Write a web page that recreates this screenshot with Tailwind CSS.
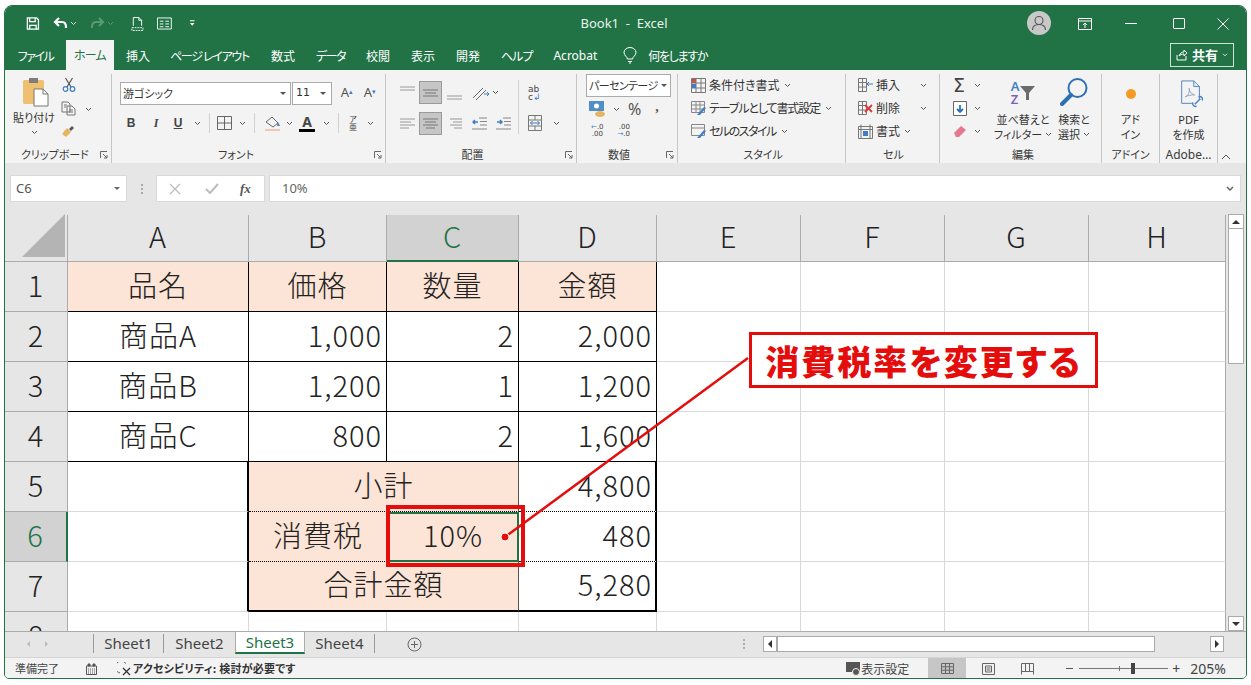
<!DOCTYPE html>
<html lang="ja">
  <head>
    <meta charset="UTF-8" />
    <title>Book1 - Excel</title>
    <script src="https://cdn.jsdelivr.net/npm/@tailwindcss/browser@4"></script>
  </head>
  <body class="bg-white w-[1251px] h-[685px] overflow-hidden font-['Noto_Sans_CJK_JP','Noto_Sans',sans-serif] [font-feature-settings:'palt'] text-[#3a3a3a]">
    <div class="relative mt-[5px] ml-[4px] w-[1243px] h-[674px] rounded-t-[8px] rounded-b-[5px] border border-[#217346] overflow-hidden flex flex-col bg-[#e6e6e6]">
      <!-- Title bar -->
      <div class="h-[35px] bg-[#217346] flex items-center text-white shrink-0">
        <div class="w-[190px] pl-[21px] flex items-center gap-[13px]">
          <svg class="w-[15px] h-[15px]" viewBox="0 0 15 15" fill="none" stroke="#fff" stroke-width="1.4"><path d="M1.5 1.5h10l2 2v10h-12z"/><path d="M4 1.5v4h6v-4M4 13.5v-4h7v4"/></svg>
          <div class="flex items-center gap-[2px]">
            <svg class="w-[15px] h-[13px]" viewBox="0 0 15 13" fill="none" stroke="#fff" stroke-width="2.2"><path d="M6 1L2 5l4 4"/><path d="M2 5h7c3 0 4 2 4 5v1"/></svg>
            <svg class="w-[7px] h-[5px]" viewBox="0 0 7 5" fill="none" stroke="#cfe3d8"><path d="M1 1l2.5 2.5L6 1"/></svg>
          </div>
          <div class="flex items-center gap-[2px]">
            <svg class="w-[15px] h-[13px]" viewBox="0 0 15 13" fill="none" stroke="#5a9a78" stroke-width="2"><path d="M9 1l4 4-4 4"/><path d="M13 5H6c-3 0-4 2-4 5v1"/></svg>
            <svg class="w-[7px] h-[5px]" viewBox="0 0 7 5" fill="none" stroke="#5a9a78"><path d="M1 1l2.5 2.5L6 1"/></svg>
          </div>
          <svg class="w-[14px] h-[16px] ml-[4px]" viewBox="0 0 14 16" fill="none" stroke="#fff"><path d="M2.5 10V1h6l3 3v6M8.5 1v3h3"/><path d="M1 12h12v3H1z" stroke-dasharray="2 1"/></svg>
          <svg class="w-[16px] h-[13px]" viewBox="0 0 16 13" fill="none" stroke="#fff"><path d="M.5.5h15v12H.5zM3 4h4M9 4h4M3 7h4M9 7h4M3 10h4M9 10h4"/></svg>
          <svg class="w-[7px] h-[7px] ml-[4px]" viewBox="0 0 7 7" fill="#fff"><path d="M1 0h5v1H1zM1 3h5L3.5 6z"/></svg>
        </div>
        <div class="flex-1 text-center text-[13px] text-[#e9f2ed] font-['Noto_Sans',sans-serif] pl-[26px]">Book1&nbsp; -&nbsp; Excel</div>
        <div class="flex items-center">
          <div class="w-[24px] h-[24px] -mt-[2px] rounded-full bg-[#c8c8c8] flex items-center justify-center">
            <svg class="w-[16px] h-[16px]" viewBox="0 0 16 16" fill="none" stroke="#555" stroke-width="1.1"><circle cx="8" cy="5.5" r="4"/><path d="M1.5 15c0-4 3-5.5 6.5-5.5s6.5 1.5 6.5 5.5"/></svg>
          </div>
          <svg class="w-[14px] h-[12px] ml-[27px]" viewBox="0 0 14 12" fill="none" stroke="#fff"><path d="M.5.5h13v11H.5zM.5 3h13M7 10V5M5 7l2-2 2 2"/></svg>
          <div class="w-[12px] h-[1px] bg-white ml-[33px]"></div>
          <div class="w-[12px] h-[11px] border border-white ml-[36px] rounded-[1px]"></div>
          <svg class="w-[12px] h-[12px] ml-[32px] mr-[17px]" viewBox="0 0 12 12" stroke="#fff" stroke-width="1"><path d="M.5.5l11 11M11.5.5l-11 11"/></svg>
        </div>
      </div>
      <!-- Tabs -->
      <div class="h-[29px] bg-[#217346] flex items-end text-white text-[12px] shrink-0 relative">
        <div class="flex items-center h-[29px]">
          <span class="w-[61px] text-center tracking-[-1.5px]">ファイル</span>
          <span class="w-[48px] h-[30px] -mt-[1px] bg-[#f3f3f3] text-[#217346] flex items-center justify-center tracking-[-.8px]">ホーム</span>
          <span class="ml-[12px]">挿入</span>
          <span class="ml-[20px] tracking-[-1.3px]">ページ レイアウト</span>
          <span class="ml-[22px]">数式</span>
          <span class="ml-[21px] tracking-[-1.5px]">データ</span>
          <span class="ml-[21px]">校閲</span>
          <span class="ml-[21px]">表示</span>
          <span class="ml-[21px]">開発</span>
          <span class="ml-[21px] tracking-[-1px]">ヘルプ</span>
          <span class="ml-[21px] font-['Noto_Sans',sans-serif]">Acrobat</span>
          <svg class="w-[14px] h-[17px] ml-[26px]" viewBox="0 0 14 17" fill="none" stroke="#fff"><path d="M4.5 12c0-2-3.500-3.500-3.500-6.500a6 5 0 0 1 12 0c0 3-3.500 4.500-3.500 6.500zM5 14.500h4M6 16h2"/></svg>
          <span class="ml-[11px] tracking-[-1.3px]">何をしますか</span>
        </div>
        <div class="absolute right-[12px] top-[2px] w-[64px] h-[24px] border border-[#cfe3d8] flex items-center justify-center gap-[4px] text-[13px] font-bold">
          <svg class="w-[12px] h-[12px]" viewBox="0 0 12 12" fill="none" stroke="#fff"><path d="M1 6v5h9V7M3 7c1-3 3-4 5-4V1l3 3-3 3V5C6 5 4 6 3 7z"/></svg>
          <span>共有</span>
          <svg class="w-[6px] h-[4px]" viewBox="0 0 7 5" fill="none" stroke="#fff"><path d="M1 1l2.5 2.5L6 1"/></svg>
        </div>
      </div>
      <!-- Ribbon -->
      <div class="h-[93px] bg-[#f3f3f3] flex text-[12px] shrink-0 pt-[4px] relative">
        <!-- Clipboard -->
        <div class="w-[107px] h-[89px] border-r border-[#c6c6c6] flex flex-col shrink-0">
          <div class="h-[72px] flex pl-[10px]">
            <div class="w-[38px] flex flex-col items-center">
              <svg class="w-[27px] h-[30px] ml-[3px] mt-[3px]" viewBox="0 0 27 30"><rect x="1" y="3" width="21" height="24" rx="1.5" fill="#eec06f"/><rect x="7" y="1" width="9" height="5" fill="#7d7d7d"/><path d="M12 12h9l5 5v12H12z" fill="#fff" stroke="#777"/><path d="M21 12v5h5" fill="none" stroke="#777"/></svg>
              <span class="text-[11px] text-[#333] mt-[3px] leading-[14px] whitespace-nowrap">貼り付け</span>
              <svg class="w-[7px] h-[5px] mt-[6px]" viewBox="0 0 7 5" fill="none" stroke="#555"><path d="M1 1l2.5 2.5L6 1"/></svg>
            </div>
            <div class="w-[21px] flex flex-col items-center gap-[9px] ml-[5px] pt-[3px]">
              <svg class="w-[14px] h-[15px]" viewBox="0 0 14 15" fill="none" stroke="#555" stroke-width="1.2"><path d="M3.5 1l5.5 9M10.5 1L5 10"/><circle cx="3.5" cy="12" r="2.3" stroke="#3e7fc4"/><circle cx="10.5" cy="12" r="2.3" stroke="#3e7fc4"/></svg>
              <svg class="w-[15px] h-[15px]" viewBox="0 0 15 15" fill="none" stroke="#777"><path d="M1 1h6l2 2v8H1zM6 5h5l3 3v6H6z" fill="#f3f3f3"/><path d="M3 4h3M3 6h2M8 9h4M8 11h4"/></svg>
              <svg class="w-[15px] h-[13px]" viewBox="0 0 15 13"><path d="M1 9l5-6 4 4-5 5z" fill="#e6b45e"/><path d="M8 4l3-3 2 2-3 3z" fill="#555"/></svg>
            </div>
            <svg class="w-[7px] h-[5px] mt-[33px] ml-[6px]" viewBox="0 0 7 5" fill="none" stroke="#555"><path d="M1 1l2.5 2.5L6 1"/></svg>
          </div>
          <div class="h-[17px] flex items-center justify-between text-[11px] pl-[16px] pr-[3px] leading-none"><span>クリップボード</span><svg class="w-[8px] h-[8px]" viewBox="0 0 8 8" fill="none" stroke="#666"><path d="M.5 7V.5H7M3 3l4 4M7 4v3H4"/></svg></div>
        </div>
        <!-- Font -->
        <div class="w-[274px] h-[89px] border-r border-[#c6c6c6] flex flex-col shrink-0 pl-[8px]">
          <div class="h-[72px] flex flex-col">
            <div class="flex items-center h-[24px] mt-[7px] gap-[1px]">
              <div class="w-[171px] h-[23px] bg-white border border-[#ababab] flex items-center justify-between px-[2px] text-[11px] text-[#333]"><span>游ゴシック</span><span class="border-x-[3px] border-t-[3px] border-x-transparent border-t-[#555] mr-[2px]"></span></div>
              <div class="w-[40px] h-[23px] bg-white border border-[#ababab] flex items-center justify-between px-[3px] text-[11px] text-[#333] font-['DejaVu_Sans',sans-serif]"><span>11</span><span class="border-x-[3px] border-t-[3px] border-x-transparent border-t-[#555] mr-[2px]"></span></div>
              <span class="ml-[7px] w-[14px] text-[13px] font-['Noto_Sans',sans-serif] text-[#555] text-center">A<sup class="text-[7px] text-[#3e7fc4]">▴</sup></span>
              <span class="ml-[8px] w-[14px] text-[13px] font-['Noto_Sans',sans-serif] text-[#555] text-center">A<sup class="text-[7px] text-[#3e7fc4]">▾</sup></span>
            </div>
            <div class="flex items-center h-[24px] mt-[6px] text-[#444]">
              <b class="w-[20px] ml-[1px] text-center font-['Liberation_Sans',sans-serif] text-[12px]">B</b>
              <i class="w-[20px] ml-[5px] text-center font-['Liberation_Serif',serif] font-bold text-[12px]">I</i>
              <u class="w-[16px] ml-[4px] text-center font-['Liberation_Sans',sans-serif] font-bold text-[12px]">U</u>
              <svg class="w-[7px] h-[5px] ml-[8px]" viewBox="0 0 7 5" fill="none" stroke="#555"><path d="M1 1l2.5 2.5L6 1"/></svg>
              <div class="w-px h-[20px] bg-[#d0d0d0] ml-[8px]"></div>
              <svg class="w-[15px] h-[14px] ml-[7px]" viewBox="0 0 15 14" fill="none" stroke="#666"><path d="M.5.5h14v13H.5zM7.5.5v13M.5 7h14"/></svg>
              <svg class="w-[7px] h-[5px] ml-[7px]" viewBox="0 0 7 5" fill="none" stroke="#555"><path d="M1 1l2.5 2.5L6 1"/></svg>
              <div class="w-px h-[20px] bg-[#d0d0d0] ml-[8px]"></div>
              <svg class="w-[17px] h-[16px] ml-[9px]" viewBox="0 0 17 16"><path d="M2 7l6-5 6 6-5 4z" fill="none" stroke="#666"/><path d="M14 7l2 4h-3z" fill="#3e7fc4"/><rect x="1" y="14" width="15" height="2" fill="#f2c6b0"/></svg>
              <svg class="w-[7px] h-[5px] ml-[5px]" viewBox="0 0 7 5" fill="none" stroke="#555"><path d="M1 1l2.5 2.5L6 1"/></svg>
              <div class="w-[16px] ml-[6px] flex flex-col items-center leading-none"><span class="text-[14px] font-['Noto_Sans',sans-serif] font-bold h-[13px] leading-[13px]">A</span><span class="w-[16px] h-[3px] bg-black mt-[1px]"></span></div>
              <svg class="w-[7px] h-[5px] ml-[8px]" viewBox="0 0 7 5" fill="none" stroke="#555"><path d="M1 1l2.5 2.5L6 1"/></svg>
              <div class="w-px h-[20px] bg-[#d0d0d0] ml-[8px]"></div>
              <span class="w-[12px] ml-[8px] text-[8px] leading-[8px] text-center">ア<br />亜</span>
              <svg class="w-[7px] h-[5px] ml-[8px]" viewBox="0 0 7 5" fill="none" stroke="#555"><path d="M1 1l2.5 2.5L6 1"/></svg>
            </div>
          </div>
          <div class="h-[17px] flex items-center justify-between text-[11px] pr-[3px] leading-none"><span class="flex-1 text-center pr-[22px]">フォント</span><svg class="w-[8px] h-[8px]" viewBox="0 0 8 8" fill="none" stroke="#666"><path d="M.5 7V.5H7M3 3l4 4M7 4v3H4"/></svg></div>
        </div>
        <!-- Alignment -->
        <div class="w-[191px] h-[89px] border-r border-[#c6c6c6] flex flex-col shrink-0 pl-[14px]">
          <div class="h-[72px] flex">
            <div class="w-[118px] flex flex-col pt-[7px]">
              <div class="flex items-center h-[23px]">
                <svg class="w-[15px] h-[8px] -mt-[6px]" viewBox="0 0 15 8" stroke="#999"><path d="M0 1h15M0 4h15"/></svg>
                <div class="w-[23px] h-[23px] ml-[4px] bg-[#c6c6c6] border border-[#9a9a9a] flex items-center justify-center"><svg class="w-[15px] h-[8px]" viewBox="0 0 15 8" stroke="#777"><path d="M0 1h15M2 4h11M0 7h15"/></svg></div>
                <svg class="w-[15px] h-[8px] ml-[5px] mt-[6px]" viewBox="0 0 15 8" stroke="#999"><path d="M0 4h15M0 7h15"/></svg>
                <svg class="w-[18px] h-[16px] ml-[10px]" viewBox="0 0 18 16" fill="none" stroke="#666"><path d="M1 13L11 3M4 15L14 5"/><path d="M12 9h5M15 7l2 2-2 2" stroke="#3e7fc4"/></svg>
                <svg class="w-[7px] h-[5px] ml-[2px]" viewBox="0 0 7 5" fill="none" stroke="#555"><path d="M1 1l2.5 2.5L6 1"/></svg>
              </div>
              <div class="flex items-center h-[23px] mt-[8px]">
                <svg class="w-[15px] h-[11px]" viewBox="0 0 15 11" stroke="#999"><path d="M0 1h15M0 4h11M0 7h15M0 10h9"/></svg>
                <div class="w-[23px] h-[23px] ml-[4px] bg-[#c6c6c6] border border-[#9a9a9a] flex items-center justify-center"><svg class="w-[15px] h-[11px]" viewBox="0 0 15 11" stroke="#777"><path d="M0 1h15M2 4h11M0 7h15M3 10h9"/></svg></div>
                <svg class="w-[12px] h-[11px] ml-[8px]" viewBox="0 0 12 11" stroke="#999"><path d="M0 1h12M3 4h9M0 7h12M4 10h8"/></svg>
                <svg class="w-[15px] h-[13px] ml-[10px]" viewBox="0 0 15 13" fill="none" stroke="#888"><path d="M7 1h8M8 4.5h7M8 8h7M0 12h15"/><path d="M6 5H1M3 3L1 5l2 2" stroke="#3e7fc4" stroke-width="1.5"/></svg>
                <svg class="w-[15px] h-[13px] ml-[9px]" viewBox="0 0 15 13" fill="none" stroke="#888"><path d="M7 1h8M8 4.5h7M8 8h7M0 12h15"/><path d="M1 5h5M4 3l2 2-2 2" stroke="#3e7fc4" stroke-width="1.5"/></svg>
              </div>
            </div>
            <div class="w-px h-[54px] bg-[#d0d0d0] mt-[6px]"></div>
            <div class="flex flex-col pl-[9px] pt-[11px]">
              <span class="text-[9px] leading-[8px] font-['DejaVu_Sans',sans-serif] text-[#444] whitespace-nowrap">ab<br />c<span class="text-[#3e7fc4]">↲</span></span>
              <div class="flex items-center mt-[14px]">
                <svg class="w-[14px] h-[16px]" viewBox="0 0 14 16" fill="none" stroke="#777"><path d="M.5.5h13v15H.5zM.5 5h13M.5 11h13M7 .5V5M7 11v4"/><path d="M2.5 8h9M4.5 6l-2 2 2 2M9.5 6l2 2-2 2" stroke="#3e7fc4"/></svg>
                <svg class="w-[7px] h-[5px] ml-[11px]" viewBox="0 0 7 5" fill="none" stroke="#555"><path d="M1 1l2.5 2.5L6 1"/></svg>
              </div>
            </div>
          </div>
          <div class="h-[17px] flex items-center justify-between text-[11px] pr-[3px] leading-none"><span class="flex-1 text-center pr-[20px]">配置</span><svg class="w-[8px] h-[8px]" viewBox="0 0 8 8" fill="none" stroke="#666"><path d="M.5 7V.5H7M3 3l4 4M7 4v3H4"/></svg></div>
        </div>
        <!-- Number -->
        <div class="w-[101px] h-[89px] border-r border-[#c6c6c6] flex flex-col shrink-0 pl-[9px]">
          <div class="h-[72px] flex flex-col">
            <div class="w-[85px] h-[23px] bg-white border border-[#ababab] flex items-center justify-between px-[2px] text-[11px] text-[#333]"><span class="whitespace-nowrap tracking-[-.6px]">パーセンテージ</span><span class="border-x-[3px] border-t-[3px] border-x-transparent border-t-[#555] mr-[1px]"></span></div>
            <div class="flex items-center h-[18px] mt-[3px] ml-[3px]">
              <svg class="w-[17px] h-[16px]" viewBox="0 0 17 16"><rect y="0" width="15" height="10" fill="#4f8fc4"/><circle cx="7.5" cy="5" r="2.5" fill="#fff"/><ellipse cx="11" cy="13" rx="5" ry="3" fill="#e6b45e"/></svg>
              <svg class="w-[7px] h-[5px] ml-[7px]" viewBox="0 0 7 5" fill="none" stroke="#555"><path d="M1 1l2.5 2.5L6 1"/></svg>
              <span class="ml-[8px] text-[16px] font-['Noto_Sans',sans-serif] leading-none text-[#555]">%</span>
              <span class="ml-[14px] text-[14px] font-['Liberation_Serif',serif] font-bold leading-none text-[#555] -mt-[4px]">,</span>
            </div>
            <div class="flex mt-[6px] ml-[5px] text-[7px] leading-[7px] font-['DejaVu_Sans',sans-serif] text-[#444]">
              <span class="text-right w-[12px]"><span class="text-[#3e7fc4]">←</span>.0<br />.00</span>
              <span class="text-right w-[13px] ml-[14px]">.00<br /><span class="text-[#3e7fc4]">→</span>.0</span>
            </div>
          </div>
          <div class="h-[17px] flex items-center justify-between text-[11px] pr-[3px] leading-none"><span class="flex-1 text-center pr-[14px]">数値</span><svg class="w-[8px] h-[8px]" viewBox="0 0 8 8" fill="none" stroke="#666"><path d="M.5 7V.5H7M3 3l4 4M7 4v3H4"/></svg></div>
        </div>
        <!-- Styles -->
        <div class="w-[168px] h-[89px] border-r border-[#c6c6c6] flex flex-col shrink-0 pl-[13px]">
          <div class="h-[72px] flex flex-col gap-[1px] text-[#333]">
            <div class="flex items-center h-[22px]"><svg class="w-[15px] h-[15px] mr-[3px]" viewBox="0 0 15 15" fill="none" stroke="#777"><path d="M.5.5h14v14H.5zM.5 5h14M.5 10h14M5 .5v14M10 .5v14"/><rect x="1" y="1" width="4" height="4" fill="#c9514a" stroke="none"/><rect x="1" y="6" width="4" height="4" fill="#3e7fc4" stroke="none"/></svg>条件付き書式<svg class="w-[7px] h-[5px] ml-[4px]" viewBox="0 0 7 5" fill="none" stroke="#555"><path d="M1 1l2.5 2.5L6 1"/></svg></div>
            <div class="flex items-center h-[22px] whitespace-nowrap"><svg class="w-[16px] h-[15px] mr-[2px]" viewBox="0 0 16 15" fill="none" stroke="#888"><path d="M.5.5h13v11H.5zM.5 4h13M.5 8h13M5 .5v11M9 .5v11"/><path d="M6 14l7-8 2 1-6 7z" fill="#3e7fc4" stroke="none"/></svg><span class="tracking-[-1.1px]">テーブルとして書式設定</span><svg class="w-[7px] h-[5px] ml-[5px]" viewBox="0 0 7 5" fill="none" stroke="#555"><path d="M1 1l2.5 2.5L6 1"/></svg></div>
            <div class="flex items-center h-[22px]"><svg class="w-[16px] h-[15px] mr-[2px]" viewBox="0 0 16 15" fill="none" stroke="#888"><path d="M.5.5h13v11H.5zM.5 4h13"/><path d="M6 14l7-8 2 1-6 7z" fill="#3e7fc4" stroke="none"/></svg><span class="tracking-[-1.5px]">セルのスタイル</span><svg class="w-[7px] h-[5px] ml-[5px]" viewBox="0 0 7 5" fill="none" stroke="#555"><path d="M1 1l2.5 2.5L6 1"/></svg></div>
          </div>
          <div class="h-[17px] flex items-center justify-center text-[11px] leading-none pr-[10px]">スタイル</div>
        </div>
        <!-- Cells -->
        <div class="w-[94px] h-[89px] border-r border-[#c6c6c6] flex flex-col shrink-0 pl-[12px]">
          <div class="h-[72px] flex flex-col gap-[1px] text-[#333]">
            <div class="flex items-center h-[22px]"><svg class="w-[15px] h-[14px] mr-[3px]" viewBox="0 0 15 14" fill="none" stroke="#777"><path d="M.5.5h8v13h-8zM.5 4.5h8M.5 9h8M4.5.5v13"/><path d="M15 6H9M11 4L9 6l2 2" stroke="#3e7fc4"/></svg>挿入<svg class="w-[7px] h-[5px] ml-[20px]" viewBox="0 0 7 5" fill="none" stroke="#555"><path d="M1 1l2.5 2.5L6 1"/></svg></div>
            <div class="flex items-center h-[22px]"><svg class="w-[15px] h-[14px] mr-[3px]" viewBox="0 0 15 14" fill="none" stroke="#777"><path d="M.5.5h8v13h-8zM.5 4.5h8M.5 9h8M4.5.5v13"/><path d="M7 4l7 7M14 4l-7 7" stroke="#d83b3b" stroke-width="1.8"/></svg>削除<svg class="w-[7px] h-[5px] ml-[20px]" viewBox="0 0 7 5" fill="none" stroke="#555"><path d="M1 1l2.5 2.5L6 1"/></svg></div>
            <div class="flex items-center h-[22px]"><svg class="w-[15px] h-[15px] mr-[3px]" viewBox="0 0 15 15" fill="none" stroke="#777"><path d="M.5 2.5h14v12H.5zM.5 5.5h14M3 .5v14M12 .5v14"/><rect x="5" y="7" width="5" height="5" fill="#3e7fc4" stroke="none"/></svg>書式<svg class="w-[7px] h-[5px] ml-[4px]" viewBox="0 0 7 5" fill="none" stroke="#555"><path d="M1 1l2.5 2.5L6 1"/></svg></div>
          </div>
          <div class="h-[17px] flex items-center justify-center text-[11px] leading-none pr-[10px]">セル</div>
        </div>
        <!-- Editing -->
        <div class="w-[162px] h-[89px] border-r border-[#c6c6c6] flex flex-col shrink-0 pl-[13px]">
          <div class="h-[72px] flex">
            <div class="w-[36px] flex flex-col gap-[1px]">
              <div class="flex items-center h-[22px]"><span class="text-[19px] leading-none font-['DejaVu_Sans',sans-serif] text-[#444]">Σ</span><svg class="w-[7px] h-[5px] ml-[9px]" viewBox="0 0 7 5" fill="none" stroke="#555"><path d="M1 1l2.5 2.5L6 1"/></svg></div>
              <div class="flex items-center h-[22px]"><svg class="w-[14px] h-[15px]" viewBox="0 0 14 15" fill="#fff" stroke="#666"><path d="M.5.5h13v14H.5z"/><path d="M7 4v7M4 8l3 3 3-3" fill="none" stroke="#2e6fb4" stroke-width="1.8"/></svg><svg class="w-[7px] h-[5px] ml-[7px]" viewBox="0 0 7 5" fill="none" stroke="#555"><path d="M1 1l2.5 2.5L6 1"/></svg></div>
              <div class="flex items-center h-[22px]"><svg class="w-[14px] h-[13px]" viewBox="0 0 14 13"><path d="M1 8l7-7 5 4-7 7H3z" fill="#e5788f"/></svg><svg class="w-[7px] h-[5px] ml-[7px]" viewBox="0 0 7 5" fill="none" stroke="#555"><path d="M1 1l2.5 2.5L6 1"/></svg></div>
            </div>
            <div class="w-[62px] flex flex-col items-center ml-[3px] text-[11px] leading-[15px] text-[#333]">
              <div class="h-[36px] flex items-center gap-[1px] mt-[1px]">
                <span class="text-[13px] leading-[13px] font-['Noto_Sans',sans-serif] font-semibold"><span class="text-[#3e7fc4]">A</span><br /><span class="text-[#7a5fb8]">Z</span></span>
                <svg class="w-[15px] h-[14px]" viewBox="0 0 15 14" fill="#6b6b6b"><path d="M0 0h15L9 7v7H6V7z"/></svg>
              </div>
              <span class="mt-[1px] whitespace-nowrap">並べ替えと</span>
              <span class="whitespace-nowrap flex items-center">フィルター<svg class="w-[7px] h-[5px] ml-[3px]" viewBox="0 0 7 5" fill="none" stroke="#555"><path d="M1 1l2.5 2.5L6 1"/></svg></span>
            </div>
            <div class="w-[38px] flex flex-col items-center ml-[1px] text-[11px] leading-[15px] text-[#333]">
              <svg class="w-[28px] h-[30px] mt-[3px] mb-[4px]" viewBox="0 0 28 30" fill="none"><circle cx="17.5" cy="11" r="9" stroke="#2e6fb4" stroke-width="2"/><path d="M11 18L2 27" stroke="#2e6fb4" stroke-width="4" stroke-linecap="round"/></svg>
              <span class="mt-[1px] whitespace-nowrap">検索と</span>
              <span class="whitespace-nowrap flex items-center">選択<svg class="w-[7px] h-[5px] ml-[3px]" viewBox="0 0 7 5" fill="none" stroke="#555"><path d="M1 1l2.5 2.5L6 1"/></svg></span>
            </div>
          </div>
          <div class="h-[17px] flex items-center justify-center text-[11px] leading-none pr-[8px]">編集</div>
        </div>
        <!-- Add-in -->
        <div class="w-[58px] h-[89px] border-r border-[#c6c6c6] flex flex-col items-center shrink-0">
          <div class="h-[72px] flex flex-col items-center text-[11px] leading-[15px] text-[#333]">
            <div class="w-[10px] h-[10px] rounded-full bg-[#f59a23] mt-[15px] mb-[13px]"></div>
            <span>アド</span><span>イン</span>
          </div>
          <div class="h-[17px] flex items-center justify-center text-[11px] leading-none">アドイン</div>
        </div>
        <!-- Adobe -->
        <div class="w-[58px] h-[89px] border-r border-[#c6c6c6] flex flex-col items-center shrink-0">
          <div class="h-[72px] flex flex-col items-center text-[11px] leading-[15px] text-[#333]">
            <svg class="w-[26px] h-[28px] mt-[6px] mb-[4px] ml-[4px]" viewBox="0 0 26 30" fill="none" stroke="#4a7fc0"><path d="M3 1h13l6 6v14M3 1v24h11M16 1v6h6"/><path d="M7 18c3-1 5-6 4-9 0 4 3 6 6 7-3 0-7 0-10 2z" stroke="#7a8fb0" stroke-width=".8"/><path d="M17 26l6-6M15 24a3 3 0 0 0 4 4M21 18a3 3 0 0 1 4 4" stroke-width="1.5"/></svg>
            <span class="font-['Noto_Sans',sans-serif]">PDF</span><span>を作成</span>
          </div>
          <div class="h-[17px] flex items-center justify-center text-[12px] leading-none whitespace-nowrap font-['Noto_Sans',sans-serif]">Adobe…</div>
        </div>
        <svg class="absolute right-[15px] bottom-[3px] w-[10px] h-[6px]" viewBox="0 0 10 6" fill="none" stroke="#555"><path d="M1 5l4-4 4 4"/></svg>
      </div>
      <!-- Formula bar -->
      <div class="h-[40px] bg-[#e6e6e6] flex items-end pb-[1px] gap-[2px] pl-[5px] shrink-0">
        <div class="w-[117px] h-[27px] bg-white border border-[#d9d9d9] flex items-center justify-between pl-[5px] pr-[6px] text-[13px] font-['Noto_Sans',sans-serif] text-[#555]"><span>C6</span><span class="border-x-[3px] border-t-[3px] border-x-transparent border-t-[#666]"></span></div>
        <div class="w-[25px] h-[27px] flex flex-col items-center justify-center gap-[2px]"><span class="w-[2px] h-[2px] bg-[#aaa]"></span><span class="w-[2px] h-[2px] bg-[#aaa]"></span><span class="w-[2px] h-[2px] bg-[#aaa]"></span></div>
        <div class="w-[109px] h-[27px] bg-white border border-[#d9d9d9] flex items-center">
          <svg class="w-[12px] h-[12px] ml-[12px]" viewBox="0 0 12 12" stroke="#bcbcbc" stroke-width="1.3"><path d="M1 1l10 10M11 1L1 11"/></svg>
          <svg class="w-[14px] h-[11px] ml-[24px]" viewBox="0 0 14 11" fill="none" stroke="#bcbcbc" stroke-width="2"><path d="M1 6l4 4 8-9"/></svg>
          <span class="ml-[21px] text-[13px] font-['Liberation_Serif',serif] italic font-bold text-[#555]">fx</span>
        </div>
        <div class="flex-1 h-[27px] bg-white border border-[#d9d9d9] mr-[5px] ml-[2px] flex items-center justify-between pl-[12px] pr-[6px] text-[13px] font-['Noto_Sans',sans-serif] text-[#666]">
          <span>10%</span>
          <svg class="w-[8px] h-[5px]" viewBox="0 0 8 5" fill="none" stroke="#666" stroke-width="1.5"><path d="M1 1l3 3 3-3"/></svg>
        </div>
      </div>
      <!-- Sheet -->
      <div class="h-[428px] flex shrink-0 bg-[#e6e6e6] overflow-hidden">
        <div class="w-[1221px] pt-[12px] bg-[#e6e6e6]">
          <div class="grid grid-cols-[63px_181px_138px_132px_138px_144px_144px_144px_137px] grid-rows-[47px_repeat(8,50px)] text-[29px] font-light tracking-[1px] text-[#222] bg-white [&>div]:pb-[4px]">
            <!-- header row -->
            <div class="bg-[#e6e6e6] border-r border-b border-[#ababab] flex items-end justify-end pr-[2px]"><div class="w-[43px] h-[43px] bg-[#b4b4b4] [clip-path:polygon(100%_0,100%_100%,0_100%)]"></div></div>
            <div class="bg-[#e6e6e6] border-r border-b border-[#ababab] flex items-center justify-center">A</div>
            <div class="bg-[#e6e6e6] border-r border-b border-[#ababab] flex items-center justify-center">B</div>
            <div class="bg-[#d2d2d2] border-r border-b-2 border-r-[#ababab] border-b-[#217346] flex items-center justify-center text-[#217346]">C</div>
            <div class="bg-[#e6e6e6] border-r border-b border-[#ababab] flex items-center justify-center">D</div>
            <div class="bg-[#e6e6e6] border-r border-b border-[#ababab] flex items-center justify-center">E</div>
            <div class="bg-[#e6e6e6] border-r border-b border-[#ababab] flex items-center justify-center">F</div>
            <div class="bg-[#e6e6e6] border-r border-b border-[#ababab] flex items-center justify-center">G</div>
            <div class="bg-[#e6e6e6] border-r border-b border-[#ababab] flex items-center justify-center">H</div>
            <!-- row 1 -->
            <div class="bg-[#e6e6e6] border-r border-b border-[#ababab] flex items-center justify-center">1</div>
            <div class="bg-[#fce4d6] border-r border-b border-black flex items-center justify-center">品名</div>
            <div class="bg-[#fce4d6] border-r border-b border-black flex items-center justify-center">価格</div>
            <div class="bg-[#fce4d6] border-r border-b border-black flex items-center justify-center">数量</div>
            <div class="bg-[#fce4d6] border-r border-b border-black flex items-center justify-center">金額</div>
            <div class="border-r border-b border-[#d9d9d9]"></div><div class="border-r border-b border-[#d9d9d9]"></div><div class="border-r border-b border-[#d9d9d9]"></div><div class="border-r border-b border-[#d9d9d9] border-r-[#ababab]"></div>
            <!-- row 2 -->
            <div class="bg-[#e6e6e6] border-r border-b border-[#ababab] flex items-center justify-center">2</div>
            <div class="border-r border-b border-black flex items-center justify-center">商品A</div>
            <div class="border-r border-b border-black flex items-center justify-end pr-[4px]">1,000</div>
            <div class="border-r border-b border-black flex items-center justify-end pr-[4px]">2</div>
            <div class="border-r border-b border-black flex items-center justify-end pr-[4px]">2,000</div>
            <div class="border-r border-b border-[#d9d9d9]"></div><div class="border-r border-b border-[#d9d9d9]"></div><div class="border-r border-b border-[#d9d9d9]"></div><div class="border-r border-b border-[#d9d9d9] border-r-[#ababab]"></div>
            <!-- row 3 -->
            <div class="bg-[#e6e6e6] border-r border-b border-[#ababab] flex items-center justify-center">3</div>
            <div class="border-r border-b border-black flex items-center justify-center">商品B</div>
            <div class="border-r border-b border-black flex items-center justify-end pr-[4px]">1,200</div>
            <div class="border-r border-b border-black flex items-center justify-end pr-[4px]">1</div>
            <div class="border-r border-b border-black flex items-center justify-end pr-[4px]">1,200</div>
            <div class="border-r border-b border-[#d9d9d9]"></div><div class="border-r border-b border-[#d9d9d9]"></div><div class="border-r border-b border-[#d9d9d9]"></div><div class="border-r border-b border-[#d9d9d9] border-r-[#ababab]"></div>
            <!-- row 4 -->
            <div class="bg-[#e6e6e6] border-r border-b border-[#ababab] flex items-center justify-center">4</div>
            <div class="border-r border-b border-black flex items-center justify-center">商品C</div>
            <div class="border-r border-b border-black flex items-center justify-end pr-[4px]">800</div>
            <div class="border-r border-b border-black flex items-center justify-end pr-[4px]">2</div>
            <div class="border-r border-b border-black flex items-center justify-end pr-[4px]">1,600</div>
            <div class="border-r border-b border-[#d9d9d9]"></div><div class="border-r border-b border-[#d9d9d9]"></div><div class="border-r border-b border-[#d9d9d9]"></div><div class="border-r border-b border-[#d9d9d9] border-r-[#ababab]"></div>
            <!-- row 5 -->
            <div class="bg-[#e6e6e6] border-r border-b border-[#ababab] flex items-center justify-center">5</div>
            <div class="border-r-2 border-r-black border-b border-b-[#d9d9d9]"></div>
            <div class="col-span-2 bg-[#fce4d6] border-r border-r-[#555] border-b [border-bottom-style:dotted] border-b-black flex items-center justify-center">小計</div>
            <div class="border-r-2 border-r-black border-b [border-bottom-style:dotted] border-b-black flex items-center justify-end pr-[3px]">4,800</div>
            <div class="border-r border-b border-[#d9d9d9]"></div><div class="border-r border-b border-[#d9d9d9]"></div><div class="border-r border-b border-[#d9d9d9]"></div><div class="border-r border-b border-[#d9d9d9] border-r-[#ababab]"></div>
            <!-- row 6 -->
            <div class="bg-[#d2d2d2] border-r-2 border-r-[#217346] border-b border-b-[#ababab] flex items-center justify-center text-[#217346]">6</div>
            <div class="border-r-2 border-r-black border-b border-b-[#d9d9d9]"></div>
            <div class="bg-[#fce4d6] border-b [border-bottom-style:dotted] border-b-black flex items-center justify-center">消費税</div>
            <div class="bg-[#fce4d6] border-2 border-[#217346] flex items-center justify-center">10%</div>
            <div class="border-r-2 border-r-black border-b [border-bottom-style:dotted] border-b-black flex items-center justify-end pr-[3px]">480</div>
            <div class="border-r border-b border-[#d9d9d9]"></div><div class="border-r border-b border-[#d9d9d9]"></div><div class="border-r border-b border-[#d9d9d9]"></div><div class="border-r border-b border-[#d9d9d9] border-r-[#ababab]"></div>
            <!-- row 7 -->
            <div class="bg-[#e6e6e6] border-r border-b border-[#ababab] flex items-center justify-center">7</div>
            <div class="border-r-2 border-r-black border-b border-b-[#d9d9d9]"></div>
            <div class="col-span-2 bg-[#fce4d6] border-r border-r-[#555] border-b-2 border-b-black flex items-center justify-center">合計金額</div>
            <div class="border-r-2 border-r-black border-b-2 border-b-black flex items-center justify-end pr-[3px]">5,280</div>
            <div class="border-r border-b border-[#d9d9d9]"></div><div class="border-r border-b border-[#d9d9d9]"></div><div class="border-r border-b border-[#d9d9d9]"></div><div class="border-r border-b border-[#d9d9d9] border-r-[#ababab]"></div>
            <!-- row 8 -->
            <div class="bg-[#e6e6e6] border-r border-[#ababab] flex items-center justify-center">8</div>
            <div class="border-r border-[#d9d9d9]"></div><div class="border-r border-[#d9d9d9]"></div><div class="border-r border-[#d9d9d9]"></div><div class="border-r border-[#d9d9d9]"></div><div class="border-r border-[#d9d9d9]"></div><div class="border-r border-[#d9d9d9]"></div><div class="border-r border-[#d9d9d9]"></div><div class="border-r border-[#ababab]"></div>
          </div>
        </div>
        <!-- Vertical scrollbar -->
        <div class="w-[20px] pt-[11px] flex flex-col items-center bg-[#e6e6e6]">
          <div class="w-[16px] h-[15px] bg-white border border-[#ababab] flex items-center justify-center"><span class="border-x-[4px] border-b-[4px] border-x-transparent border-b-[#333]"></span></div>
          <div class="w-[16px] h-[135px] bg-white border border-[#ababab] border-t-0"></div>
          <div class="flex-1"></div>
          <div class="w-[16px] h-[15px] bg-white border border-[#ababab] flex items-center justify-center"><span class="border-x-[4px] border-t-[4px] border-x-transparent border-t-[#333]"></span></div>
        </div>
      </div>
      <!-- Sheet tabs -->
      <div class="h-[26px] flex items-stretch bg-[#e6e6e6] border-t border-[#ababab] text-[15px] font-['Noto_Sans',sans-serif] text-[#444] shrink-0">
        <div class="w-[72px] flex items-center gap-[15px] pl-[22px] pb-[2px] text-[#c0c0c0]">
          <span class="border-y-[3px] border-r-[3px] border-y-transparent border-r-[#bbb]"></span>
          <span class="border-y-[3px] border-l-[3px] border-y-transparent border-l-[#bbb]"></span>
        </div>
        <div class="w-[17px] border-r border-[#999] mt-[2px] mb-[4px]"></div>
        <div class="w-[70px] border-r border-[#999] mt-[2px] mb-[4px] flex items-center justify-center">Sheet1</div>
        <div class="w-[71px] flex items-center justify-center mt-[2px] mb-[4px]">Sheet2</div>
        <div class="w-[70px] bg-white text-[#217346] border-b-2 border-[#217346] flex items-center justify-center h-[22px] border-x border-x-[#ababab]">Sheet3</div>
        <div class="w-[70px] border-r border-[#999] mt-[2px] mb-[4px] flex items-center justify-center">Sheet4</div>
        <div class="ml-[32px] flex items-center pb-[1px]"><svg class="w-[15px] h-[15px]" viewBox="0 0 15 15" fill="none" stroke="#666"><circle cx="7.5" cy="7.5" r="6.5"/><path d="M7.5 4v7M4 7.5h7"/></svg></div>
        <div class="flex-1 flex items-center justify-end pb-[2px]">
          <div class="flex flex-col gap-[2px] mr-[18px]"><span class="w-[2px] h-[2px] bg-[#aaa]"></span><span class="w-[2px] h-[2px] bg-[#aaa]"></span><span class="w-[2px] h-[2px] bg-[#aaa]"></span></div>
          <div class="w-[14px] h-[16px] bg-white border border-[#ababab] flex items-center justify-center"><span class="border-y-[4px] border-r-[4px] border-y-transparent border-r-[#333]"></span></div>
          <div class="w-[378px] h-[16px] bg-white border border-[#ababab]"></div>
          <div class="w-[55px]"></div>
          <div class="w-[14px] h-[16px] bg-white border border-[#ababab] flex items-center justify-center mr-[22px]"><span class="border-y-[4px] border-l-[4px] border-y-transparent border-l-[#333]"></span></div>
        </div>
      </div>
      <!-- Status bar -->
      <div class="h-[22px] flex items-center bg-[#f3f3f3] border-t border-[#d4d4d4] text-[11px] text-[#444] flex-1">
        <span class="ml-[10px]">準備完了</span>
        <svg class="w-[11px] h-[12px] ml-[27px]" viewBox="0 0 11 12" fill="none" stroke="#555"><path d="M.5 3h10v8.5H.5z"/><path d="M2 1h2v2H2zM7 1h2v2H7z" fill="#555"/><path d="M2 6h7M2 8h7M2 10h7" stroke-dasharray="1 1"/></svg>
        <svg class="w-[14px] h-[14px] ml-[20px]" viewBox="0 0 14 14" fill="none" stroke="#666"><path d="M9 1.500A6 6 0 1 0 3 11"/><path d="M6 6l7 7M13 6l-7 7" stroke="#333" stroke-width="1.3"/></svg>
        <span class="ml-[2px] font-bold text-[#333] text-[11px] tracking-[.2px]">アクセシビリティ: 検討が必要です</span>
        <div class="flex-1"></div>
        <svg class="w-[15px] h-[14px]" viewBox="0 0 15 14"><rect width="14" height="10" fill="#555"/><circle cx="10" cy="10" r="3.5" fill="#555" stroke="#f3f3f3"/></svg>
        <span class="mr-[19px] text-[12px]">表示設定</span>
        <div class="w-[38px] h-[21px] bg-[#c6c6c6] flex items-center justify-center"><svg class="w-[13px] h-[11px]" viewBox="0 0 13 11" fill="none" stroke="#666"><path d="M.5.5h12v10H.5zM.5 3.800h12M.5 7.200h12M4.5.5v10M8.5.5v10"/></svg></div>
        <svg class="w-[13px] h-[12px] ml-[16px]" viewBox="0 0 13 12" fill="none" stroke="#666"><path d="M.5.5h12v11H.5zM3.5 3h6v6h-6zM4.5 5h4M4.5 7h4"/></svg>
        <svg class="w-[13px] h-[12px] ml-[26px]" viewBox="0 0 13 12" fill="none" stroke="#666"><path d="M.5 11.500V.5h12v11M.5 8.500h12M4.5.5v8M8.5.5v8"/></svg>
        <span class="w-[7px] h-px bg-[#555] ml-[32px]"></span>
        <div class="w-[89px] h-px bg-[#777] ml-[6px] relative"><span class="absolute left-[40px] -top-[2px] w-px h-[5px] bg-[#777]"></span><span class="absolute left-[52px] -top-[5px] w-[4px] h-[11px] bg-[#444]"></span></div>
        <span class="ml-[4px] text-[14px] leading-none font-['Noto_Sans',sans-serif]">+</span>
        <span class="ml-[10px] mr-[20px] text-[14px] font-['Noto_Sans',sans-serif]">205%</span>
      </div>
      <!-- Callout -->
      <div class="absolute left-[744px] top-[326px] w-[349px] h-[56px] bg-white border-[3px] border-[#e50c0c] flex items-center justify-center text-[34px] font-black text-[#e50c0c] tracking-[2px] whitespace-nowrap">消費税率を変更する</div>
      <!-- Red box around C6 -->
      <div class="absolute left-[381px] top-[499px] w-[139px] h-[62px] border-[4px] border-[#e50c0c]"></div>
      <!-- Leader line -->
      <svg class="absolute left-0 top-0 w-[1241px] h-[672px] pointer-events-none" viewBox="0 0 1241 672"><line x1="500" y1="531" x2="743" y2="352" stroke="#e50c0c" stroke-width="2.5"/><circle cx="500" cy="531" r="4" fill="#e50c0c" stroke="#fff" stroke-width="1"/></svg>
    </div>
  </body>
</html>
